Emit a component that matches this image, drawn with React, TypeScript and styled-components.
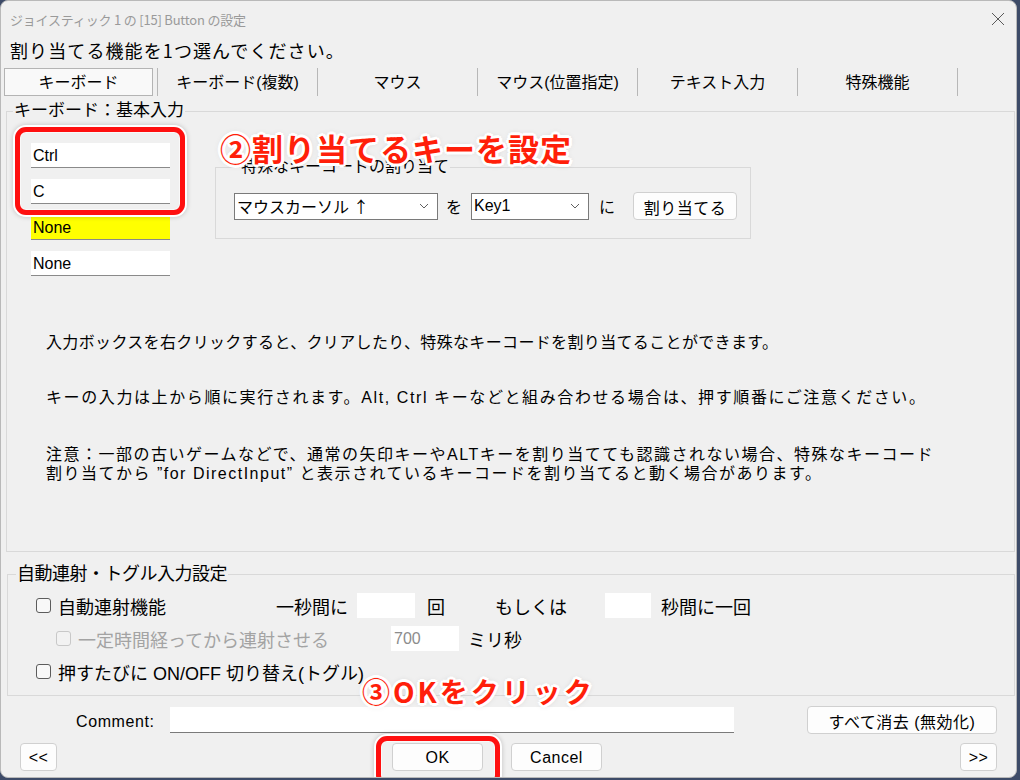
import React from 'react';
import styled, { createGlobalStyle } from 'styled-components';

const FONT = `"Liberation Sans", "Noto Sans CJK JP", sans-serif`;
const CJK = `"Noto Sans CJK JP", "Noto Sans", sans-serif`;

const GlobalStyle = createGlobalStyle`
  html, body { margin: 0; padding: 0; }
  body {
    background: #3d4b68;
    font-family: ${FONT};
    width: 1020px;
    height: 780px;
    overflow: hidden;
    color: #000;
  }
  * { box-sizing: border-box; }
`;

const Window = styled.div`
  position: relative;
  width: 1017px;
  height: 778px;
  background: #f0f0f0;
  border: 1px solid #b9b9b9;
  border-radius: 8px;
  display: flex;
  flex-direction: column;
  overflow: hidden;
`;

const TitleBar = styled.div`
  height: 37px;
  flex: none;
  display: flex;
  align-items: center;
  justify-content: space-between;
  padding: 0 11px 0 9px;
`;

const TitleText = styled.span`
  font-family: ${CJK};
  font-size: 13px;
  color: #9a9a9a;
  line-height: 16px;
  letter-spacing: -0.2px;
`;

const CloseBtn = styled.span`
  display: flex;
  width: 14px;
  height: 14px;
  margin-top: -2px;
`;

const Heading = styled.div`
  font-family: ${CJK};
  height: 24px;
  line-height: 24px;
  font-size: 18px;
  letter-spacing: 1.1px;
  padding-left: 9px;
  flex: none;
`;

const TabsRow = styled.div`
  display: flex;
  height: 28px;
  margin-top: 6px;
  flex: none;
`;

const Tab = styled.div`
  width: 160px;
  height: 28px;
  border-right: 1px solid #b7b7b7;
  display: flex;
  &:first-child { width: 157px; }
`;

const TabFace = styled.div<{ $active?: boolean }>`
  flex: 1;
  margin: ${(p) => (p.$active ? '0 4px 0 3px' : '0')};
  display: flex;
  align-items: center;
  justify-content: center;
  font-size: 16px;
  line-height: 20px;
  padding-top: 1px;
  background: ${(p) => (p.$active ? '#f9f9f9' : 'transparent')};
  border: 1px solid ${(p) => (p.$active ? '#b4b4b4' : 'transparent')};
`;

const Group = styled.fieldset<{ $top: number; $left: number }>`
  margin: ${(p) => p.$top}px 1px 0 ${(p) => p.$left}px;
  padding: 0;
  border: 1px solid #d9d9d9;
  min-width: 0;
  flex: none;
`;

const Legend = styled.legend<{ $size: number; $indent: number; $ls?: number }>`
  padding: 0 1px;
  margin-left: ${(p) => p.$indent}px;
  font-size: ${(p) => p.$size}px;
  letter-spacing: ${(p) => p.$ls ?? 0}px;
  line-height: 20px;
`;

const TopRow = styled.div`
  display: flex;
  align-items: flex-start;
  padding: 22px 0 0 24px;
`;

const KeyColumn = styled.div`
  display: flex;
  flex-direction: column;
  gap: 11px;
`;

const KeyInput = styled.input<{ $hi?: boolean }>`
  width: 139px;
  height: 25px;
  border: none;
  border-bottom: 1px solid #8a8a8a;
  background: ${(p) => (p.$hi ? '#ffff00' : '#ffffff')};
  font-family: ${FONT};
  font-size: 16px;
  padding: 2px 2px 0;
  color: #000;
  outline: none;
`;

const SpecialGroup = styled.fieldset`
  margin: 15px 0 0 45px;
  padding: 16px 0 18px 18px;
  width: 536px;
  border: 1px solid #d9d9d9;
  min-width: 0;
`;

const SpecialLegend = styled.legend`
  padding: 0 1px;
  margin-left: 6px;
  font-size: 16px;
  line-height: 18px;
`;

const SpecialRow = styled.div`
  display: flex;
  align-items: center;
`;

const Select = styled.div<{ $w: number }>`
  width: ${(p) => p.$w}px;
  height: 27px;
  border: 1px solid #7a7a7a;
  background: #fff;
  display: flex;
  align-items: center;
  justify-content: space-between;
  padding: 0 8px 0 2px;
  font-size: 16px;
`;

const Arrow = styled.span`
  font-family: ${CJK};
  margin-left: 4px;
`;

const Connector = styled.span<{ $l: number; $r: number }>`
  font-size: 16px;
  margin: 0 ${(p) => p.$r}px 0 ${(p) => p.$l}px;
`;

const Button = styled.button<{ $w: number }>`
  width: ${(p) => p.$w}px;
  height: 28px;
  background: #fdfdfd;
  border: 1px solid #d0d0d0;
  border-radius: 4px;
  font-family: ${FONT};
  font-size: 16px;
  color: #000;
  padding: 1px 0 0;
  display: flex;
  align-items: center;
  justify-content: center;
  letter-spacing: 0.5px;
`;

const Notes = styled.div`
  padding: 57px 0 68px 39px;
  font-size: 16px;
  line-height: 19px;
`;

const Note = styled.p<{ $gap: number; $ls: number }>`
  margin: ${(p) => p.$gap}px 0 0;
  letter-spacing: ${(p) => p.$ls}px;
  white-space: nowrap;
`;

const AutoBody = styled.div`
  padding: 5px 0 7px 28px;
  font-size: 18px;
`;

const AutoRow = styled.div<{ $indent?: number }>`
  height: 33px;
  display: flex;
  align-items: center;
  padding-left: ${(p) => p.$indent ?? 0}px;
`;

const Check = styled.span<{ $disabled?: boolean }>`
  width: 15px;
  height: 15px;
  flex: none;
  border: 1px solid ${(p) => (p.$disabled ? '#c8c8c8' : '#5c5c5c')};
  border-radius: 3px;
  background: ${(p) => (p.$disabled ? '#f2f2f2' : '#f8f8f8')};
`;

const CheckLabel = styled.span<{ $w?: number; $disabled?: boolean }>`
  margin-left: 7px;
  width: ${(p) => (p.$w ? `${p.$w}px` : 'auto')};
  flex: none;
  color: ${(p) => (p.$disabled ? '#a3a3a3' : '#000')};
  white-space: nowrap;
`;

const Cell = styled.span<{ $w?: number; $l?: number }>`
  width: ${(p) => (p.$w ? `${p.$w}px` : 'auto')};
  margin-left: ${(p) => p.$l ?? 0}px;
  flex: none;
  white-space: nowrap;
`;

const NumBox = styled.div<{ $w: number }>`
  width: ${(p) => p.$w}px;
  height: 25px;
  background: #fff;
  flex: none;
  font-size: 16px;
  line-height: 25px;
  padding-left: 3px;
  color: #8c8c8c;
`;

const CommentRow = styled.div`
  display: flex;
  align-items: center;
  margin-top: 10px;
  padding: 0 19px 0 75px;
  height: 28px;
`;

const CommentLabel = styled.span`
  width: 94px;
  font-size: 16px;
  letter-spacing: 0.6px;
  padding-top: 3px;
`;

const CommentInput = styled.div`
  width: 564px;
  height: 26px;
  background: #fff;
  border-bottom: 1px solid #7a7a7a;
`;

const Spacer = styled.div`
  flex: 1;
`;

const ButtonRow = styled.div`
  display: flex;
  align-items: center;
  margin-top: 9px;
  padding: 0 19px 0 19px;
  height: 28px;
`;

const Gap = styled.div<{ $w: number }>`
  width: ${(p) => p.$w}px;
  flex: none;
`;

const Callout = styled.div<{ $x: number; $y: number; $size: number; $ls: number }>`
  position: absolute;
  left: ${(p) => p.$x}px;
  top: ${(p) => p.$y}px;
  font-family: ${CJK};
  font-size: ${(p) => p.$size}px;
  line-height: 1;
  font-weight: 700;
  letter-spacing: ${(p) => p.$ls}px;
  color: #ff1f0a;
  white-space: nowrap;
  text-shadow:
    2px 0 #fff, -2px 0 #fff, 0 2px #fff, 0 -2px #fff,
    2px 2px #fff, -2px -2px #fff, 2px -2px #fff, -2px 2px #fff,
    3px 0 #fff, -3px 0 #fff, 0 3px #fff, 0 -3px #fff,
    0 0 6px rgba(0, 0, 0, 0.25);
`;

const RedFrame = styled.div<{ $x: number; $y: number; $w: number; $h: number }>`
  position: absolute;
  left: ${(p) => p.$x}px;
  top: ${(p) => p.$y}px;
  width: ${(p) => p.$w}px;
  height: ${(p) => p.$h}px;
  border: 5px solid #ff1010;
  border-radius: 11px;
  box-shadow: 0 0 0 2px #fff, inset 0 0 0 1px rgba(255, 255, 255, 0.6), 0 0 5px 2px rgba(0, 0, 0, 0.2);
`;

const Chevron = () => (
  <svg width="10" height="6" viewBox="0 0 10 6">
    <path d="M1 1l4 4 4-4" fill="none" stroke="#606060" strokeWidth="1" />
  </svg>
);

const tabs = ['キーボード', 'キーボード(複数)', 'マウス', 'マウス(位置指定)', 'テキスト入力', '特殊機能'];

export default function App() {
  return (
    <>
      <GlobalStyle />
      <Window>
        <TitleBar>
          <TitleText>ジョイスティック 1 の [15] Button の設定</TitleText>
          <CloseBtn>
            <svg width="14" height="14" viewBox="0 0 14 14">
              <path d="M1 1L13 13M13 1L1 13" stroke="#5a5a5a" strokeWidth="1" />
            </svg>
          </CloseBtn>
        </TitleBar>
        <Heading>割り当てる機能を1つ選んでください。</Heading>
        <TabsRow>
          {tabs.map((t, i) => (
            <Tab key={t}>
              <TabFace $active={i === 0}>{t}</TabFace>
            </Tab>
          ))}
        </TabsRow>

        <Group $top={5} $left={5}>
          <Legend $size={17} $indent={6}>キーボード：基本入力</Legend>
          <TopRow>
            <KeyColumn>
              <KeyInput readOnly value="Ctrl" />
              <KeyInput readOnly value="C" />
              <KeyInput readOnly value="None" $hi />
              <KeyInput readOnly value="None" />
            </KeyColumn>
            <SpecialGroup>
              <SpecialLegend>特殊なキーコードの割り当て</SpecialLegend>
              <SpecialRow>
                <Select $w={204}>
                  <span>
                    マウスカーソル<Arrow>↑</Arrow>
                  </span>
                  <Chevron />
                </Select>
                <Connector $l={8} $r={9}>を</Connector>
                <Select $w={118}>
                  <span>Key1</span>
                  <Chevron />
                </Select>
                <Connector $l={10} $r={18}>に</Connector>
                <Button $w={104}>割り当てる</Button>
              </SpecialRow>
            </SpecialGroup>
          </TopRow>
          <Notes>
            <Note $gap={0} $ls={0.35}>入力ボックスを右クリックすると、クリアしたり、特殊なキーコードを割り当てることができます。</Note>
            <Note $gap={36} $ls={1.6}>キーの入力は上から順に実行されます。Alt, Ctrl キーなどと組み合わせる場合は、押す順番にご注意ください。</Note>
            <Note $gap={38} $ls={1.5}>
              注意：一部の古いゲームなどで、通常の矢印キーやALTキーを割り当てても認識されない場合、特殊なキーコード
              <br />
              割り当てから ”for DirectInput” と表示されているキーコードを割り当てると動く場合があります。
            </Note>
          </Notes>
        </Group>

        <Group $top={12} $left={6}>
          <Legend $size={18} $indent={8} $ls={-0.5}>自動連射・トグル入力設定</Legend>
          <AutoBody>
            <AutoRow>
              <Check />
              <CheckLabel $w={218}>自動連射機能</CheckLabel>
              <Cell $w={81}>一秒間に</Cell>
              <NumBox $w={58} />
              <Cell $w={68} $l={12}>回</Cell>
              <Cell $w={110}>もしくは</Cell>
              <NumBox $w={46} />
              <Cell $l={10}>秒間に一回</Cell>
            </AutoRow>
            <AutoRow $indent={20}>
              <Check $disabled />
              <CheckLabel $w={313} $disabled>一定時間経ってから連射させる</CheckLabel>
              <NumBox $w={68}>700</NumBox>
              <Cell $l={9}>ミリ秒</Cell>
            </AutoRow>
            <AutoRow>
              <Check />
              <CheckLabel>押すたびに ON/OFF 切り替え(トグル)</CheckLabel>
            </AutoRow>
          </AutoBody>
        </Group>

        <CommentRow>
          <CommentLabel>Comment:</CommentLabel>
          <CommentInput />
          <Spacer />
          <Button $w={190}>すべて消去 (無効化)</Button>
        </CommentRow>

        <ButtonRow>
          <Button $w={37}>&lt;&lt;</Button>
          <Gap $w={335} />
          <Button $w={91}>OK</Button>
          <Gap $w={28} />
          <Button $w={91}>Cancel</Button>
          <Spacer />
          <Button $w={37}>&gt;&gt;</Button>
        </ButtonRow>

        <RedFrame $x={14} $y={126} $w={170} $h={88} />
        <Callout $x={219} $y={131} $size={31} $ls={1}>②割り当てるキーを設定</Callout>
        <RedFrame $x={375} $y={735} $w={124} $h={50} />
        <Callout $x={361} $y={676} $size={28} $ls={3}>③OKをクリック</Callout>
      </Window>
    </>
  );
}
